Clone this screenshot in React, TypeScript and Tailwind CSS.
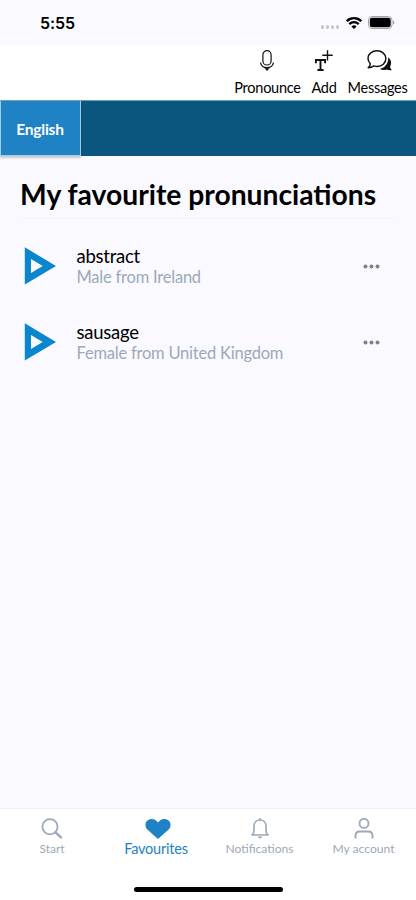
import React from 'react';

type IconProps = { className?: string };

const Wifi = () => (
  <svg width="16" height="12" viewBox="0 0 16 12" fill="none" stroke="#000" strokeWidth="2.3">
    <path d="M.8 4.200a10.200 10.200 0 0 1 14.400 0M3.300 7.100a6.600 6.600 0 0 1 9.400 0" />
    <path d="M5.400 9.400a3.800 3.800 0 0 1 5.200 0L8 12z" fill="#000" stroke="none" />
  </svg>
);

const Battery = () => (
  <svg width="27" height="13" viewBox="0 0 27 13">
    <rect x="0.5" y="0.5" width="23.500" height="12" rx="3.600" fill="none" stroke="#a4a4a8" />
    <rect x="1.800" y="1.800" width="20.900" height="9.400" rx="2.300" fill="#000" />
    <path d="M25 4.500q1.400.5 1.400 2T25 8.500z" fill="#a4a4a8" />
  </svg>
);

const Mic = () => (
  <svg className="mr-px" width="16" height="22" viewBox="0 0 16 22" fill="none" stroke="#111" strokeWidth="1.200">
    <rect x="3.900" y="0.700" width="8.200" height="14.300" rx="4.100" />
    <path d="M1.500 12.600c.6 3.300 3 5 6.500 5s5.900-1.700 6.500-5M8 17.500v2.700" />
    <path d="M5.300 18.300h5.400L8 20.800z" fill="#111" stroke="none" />
  </svg>
);

const AddText = () => (
  <svg width="20" height="22" viewBox="0 0 20 22" fill="none" stroke="#111">
    <path d="M1.900 13.200V10h9.200v3.200M6.500 10v10M3.400 20h6.200" strokeWidth="1.900" />
    <path d="M13.500.2v10.400M8.300 5.200h10.400" strokeWidth="1.400" />
  </svg>
);

const Chat = () => (
  <svg width="26" height="22" viewBox="0 0 26 22">
    <path d="M21.200 7.300c3.200 2.600 3.600 6.400 1.900 9.300 0 1.300.6 2.400 1.800 3.400-2.200.4-3.800.1-5.100-.6-2.400.9-4.900.7-7.100-.4 5.600-1.200 8.900-5.900 8.500-11.700z" fill="#111" />
    <path d="M3.300 13.700C.1 10.600.2 5.500 3.800 2.800 7.400.2 12.700.2 16.100 2.900c3.700 3.100 3.600 8.300.2 11.400-2.500 2.100-6.100 2.700-9.400 1.600-1.600 1.100-3.500 1.800-5.700 1.800 1.300-1.100 2.200-2.400 2.100-4z" fill="#fff" stroke="#111" strokeWidth="1.500" strokeLinejoin="round" />
  </svg>
);

const Search = () => (
  <svg width="22" height="22" viewBox="0 0 22 22" fill="none" stroke="#9ca9b8">
    <circle cx="9" cy="8.800" r="7.600" strokeWidth="1.800" />
    <path d="M14.500 14.300l5.500 5" strokeWidth="2.500" strokeLinecap="round" />
  </svg>
);

const Heart = () => (
  <svg className="ml-1" width="26" height="20" viewBox="0 0 26 20" fill="#1e82c4">
    <path d="M13 20 2.600 10.700C-.2 8-.2 4 2.200 1.800 5.400-.9 10-.5 13 3.500c3-4 7.600-4.400 10.800-1.700 2.400 2.200 2.400 6.200-.4 8.900z" />
  </svg>
);

const Bell = () => (
  <svg width="18" height="21" viewBox="0 0 18 21" fill="none" stroke="#9ca9b8" strokeWidth="1.600">
    <path d="M1 17c1.700-1.300 2-2.600 2-5.600V8.300c0-3.700 2.300-6.300 6-6.300s6 2.600 6 6.300v3.100c0 3 .3 4.300 2 5.600z" strokeLinejoin="round" />
    <path d="M9 .2v2" strokeWidth="2" />
    <path d="M6.800 18.600h4.400Q10.700 20.600 9 20.600t-2.200-2z" fill="#9ca9b8" stroke="none" />
  </svg>
);

const User = () => (
  <svg width="20" height="21" viewBox="0 0 20 21" fill="none" stroke="#9ca9b8" strokeWidth="1.900">
    <circle cx="10" cy="5.400" r="4.500" />
    <path d="M1.500 20.400v-2.600c0-2.700 1.700-4.300 4.300-4.300h8.400c2.600 0 4.300 1.600 4.300 4.300v2.600" />
  </svg>
);

const Play = ({ className }: IconProps) => (
  <svg className={className} width="32" height="38" viewBox="0 0 32 38">
    <path d="M.8.300 32 19 .800 37.500zM7 12v14L18.700 19z" fill="#0a86cd" fillRule="evenodd" />
  </svg>
);

const Row = ({ word, by }: { word: string; by: string }) => (
  <div className="flex h-[76px] items-center pl-6 pr-9">
    <Play className="shrink-0" />
    <div className="ml-[20.500px] flex-1 whitespace-nowrap pt-0.5">
      <div className="text-[18.500px] leading-[21px] tracking-[-0.26px]">{word}</div>
      <div className="text-[16.500px] leading-[21px] tracking-[-0.220px] text-[#9ca9b8]">{by}</div>
    </div>
    <svg className="-mr-px" width="18" height="5" viewBox="0 0 18 5" fill="#808085">
      <circle cx="2.500" cy="2.400" r="2" />
      <circle cx="8.500" cy="2.400" r="2" />
      <circle cx="14.500" cy="2.400" r="2" />
    </svg>
  </div>
);

export default function App() {
  return (
    <div className="flex h-[900px] w-[416px] flex-col overflow-hidden bg-[#faf9ff] font-[Lato,sans-serif] text-black">
      <div className="flex h-[45px] shrink-0 items-center pl-10 pr-[21px]">
        <div className="font-[Inter,sans-serif] text-[16px] font-semibold leading-5 tracking-[-0.1px]">5:55</div>
        <div className="ml-auto mr-[7px] mt-[9px] flex gap-[1.500px]">
          <i className="size-[3.500px] rounded-full bg-[#c6c6cc]" />
          <i className="size-[3.500px] rounded-full bg-[#c6c6cc]" />
          <i className="size-[3.500px] rounded-full bg-[#c6c6cc]" />
          <i className="size-[3.500px] rounded-full bg-[#c6c6cc]" />
        </div>
        <Wifi />
        <div className="ml-[6px]"><Battery /></div>
      </div>

      <header className="flex h-[55px] shrink-0 justify-end bg-white pr-2 pt-[5px] text-[14.500px] leading-[18px] tracking-[-0.25px]">
        <div className="flex w-[67px] flex-col items-center"><Mic /><span className="mt-[7px]">Pronounce</span></div>
        <div className="ml-[10px] flex w-[26px] flex-col items-center"><AddText /><span className="mt-[7px]">Add</span></div>
        <div className="ml-[10px] flex w-[61px] flex-col items-center"><div className="ml-[4px] h-[22px]"><Chat /></div><span className="mt-[7px]">Messages</span></div>
      </header>

      <nav className="flex h-14 shrink-0 border-t border-[#6ea0ba] bg-[#0a567e]">
        <div className="flex w-[81px] items-center justify-center border-x border-b border-[#a4cce6] bg-[#1e82c4] pr-px pt-[3px] text-[15.500px] font-bold tracking-[-0.250px] text-white shadow-[0_2px_2px_rgba(0,0,0,0.2)]">English</div>
      </nav>

      <main className="flex-1">
        <div className="mx-[21px] h-[63px] border-b border-[#f3f3f8] pt-[18px]">
          <h1 className="-ml-px whitespace-nowrap text-[28.250px] font-bold leading-10">My favourite pronunciations</h1>
        </div>
        <div className="mt-[9px]">
          <Row word="abstract" by="Male from Ireland" />
          <Row word="sausage" by="Female from United Kingdom" />
        </div>
      </main>

      <footer className="h-[92px] shrink-0 border-t border-[#f1f0f6] bg-white">
        <div className="grid h-[60px] grid-cols-4 pt-[9px] text-[12px] text-[#9ca9b8]">
          <div className="flex flex-col items-center"><Search /><span className="leading-[18px]">Start</span></div>
          <div className="flex flex-col items-center pt-px text-[14.500px] tracking-[-0.220px] text-[#1e82c4]"><Heart /><span className="leading-[20px]">Favourites</span></div>
          <div className="-ml-px flex flex-col items-center"><Bell /><span className="mt-px text-[12.100px] leading-[18px]">Notifications</span></div>
          <div className="-ml-px flex flex-col items-center"><User /><span className="mt-px text-[12.100px] leading-[18px]">My account</span></div>
        </div>
        <div className="mx-auto mt-[17.500px] h-[5px] w-[149px] rounded-full bg-black" />
      </footer>
    </div>
  );
}
